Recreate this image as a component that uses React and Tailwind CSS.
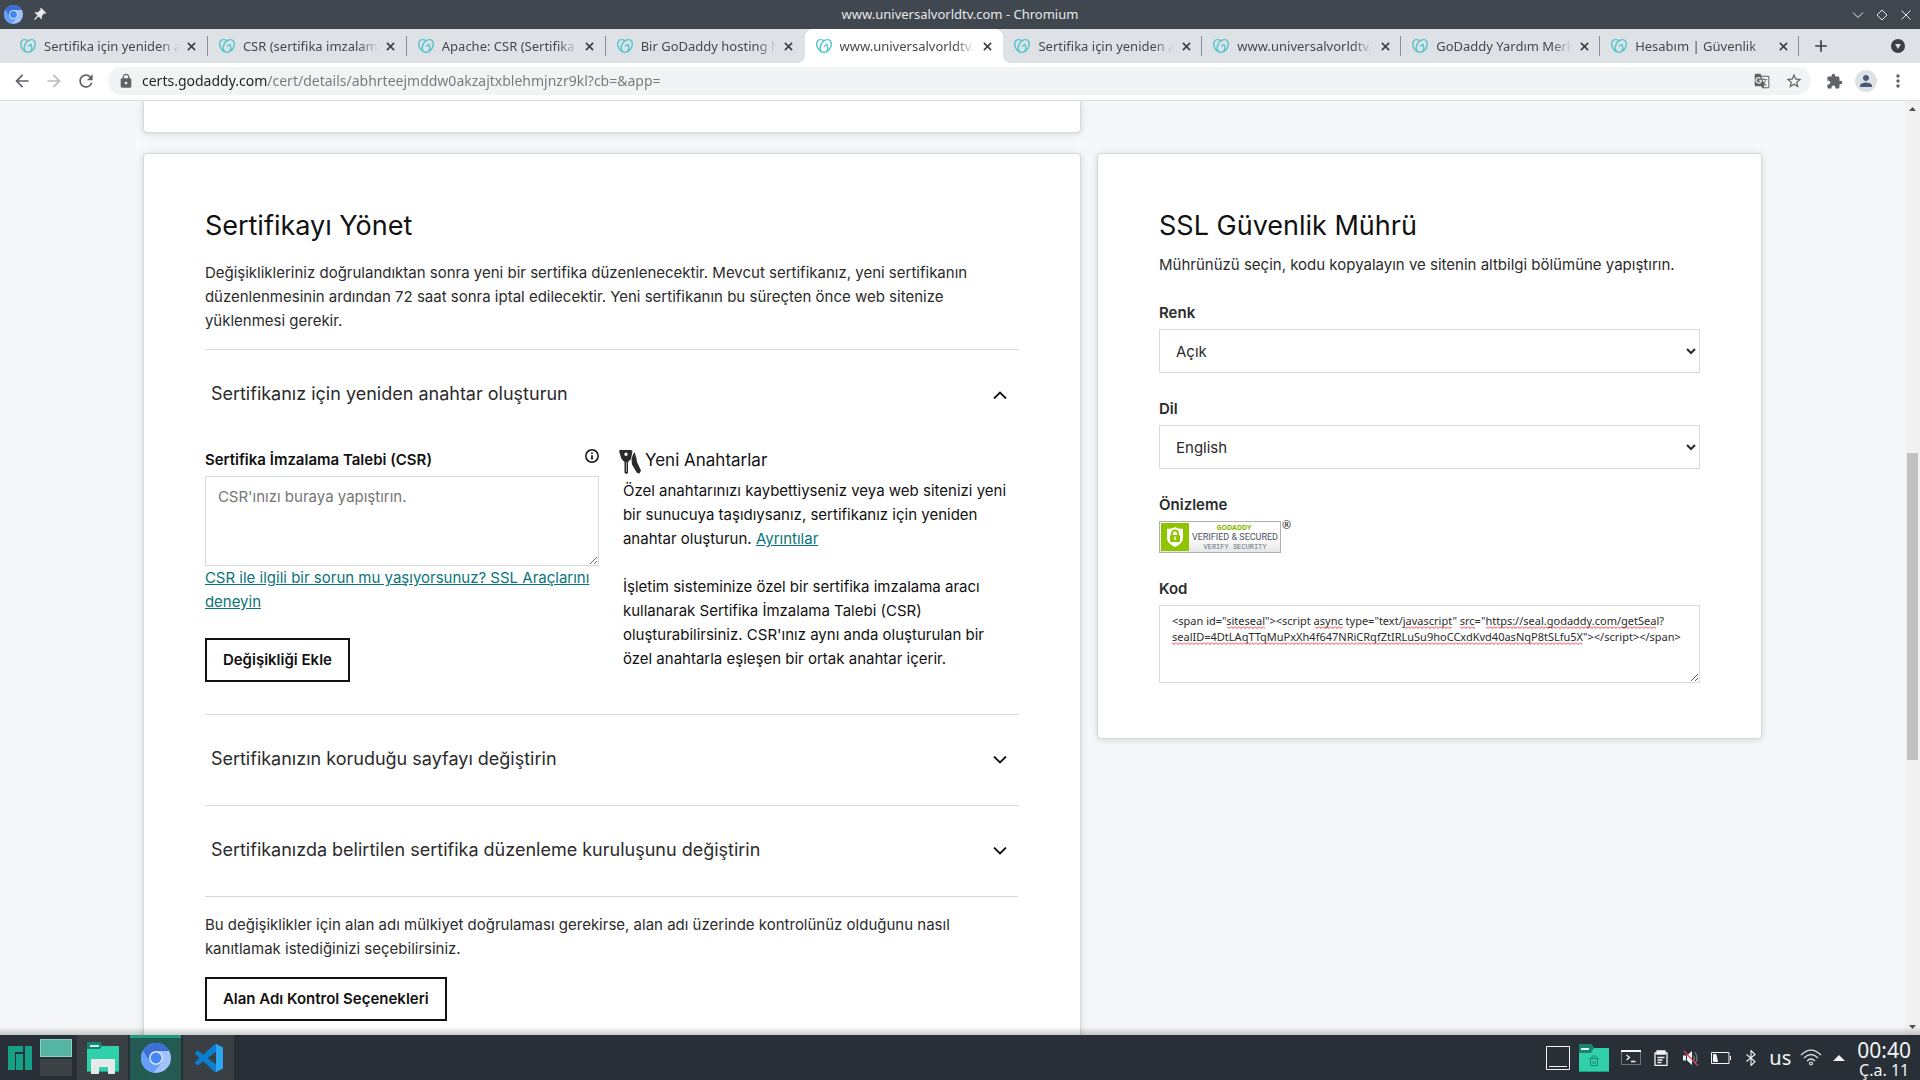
import React from 'react';
import {
  MdLock, MdArrowBack, MdArrowForward, MdRefresh, MdGTranslate, MdStarBorder,
  MdExtension, MdPerson, MdMoreVert, MdAdd, MdPushPin,
} from 'react-icons/md';
import { SiGodaddy } from 'react-icons/si';

const TABS = [
  { title: 'Sertifika için yeniden anahtar oluşturma' },
  { title: 'CSR (sertifika imzalama talebi)' },
  { title: 'Apache: CSR (Sertifika İmzalama)' },
  { title: 'Bir GoDaddy hosting hesabı' },
  { title: 'www.universalvorldtv.com', active: true },
  { title: 'Sertifika için yeniden anahtar oluşturma' },
  { title: 'www.universalvorldtv.com' },
  { title: 'GoDaddy Yardım Merkezi' },
  { title: 'Hesabım | Güvenlik' },
];

const SEAL_CODE =
  '<span id="siteseal"><script async type="text/javascript" src="https://seal.godaddy.com/getSeal?\nsealID=4DtLAqTTqMuPxXh4f647NRiCRqfZtIRLuSu9hoCCxdKvd40asNqP8tSLfu5X"></script></span>';

function ChromiumLogo({ className }) {
  return (
    <svg viewBox="0 0 30 30" className={className} aria-hidden="true">
      <circle cx="15" cy="15" r="15" fill="#a1c2fa" />
      <path d="M15 15 L2 7.5 A15 15 0 0 0 12.5 29.8 L21.5 18.7 Z" fill="#669df6" />
      <path d="M15 8 H28.3 A15 15 0 0 0 2 7.5 L8.9 18.5 Z" fill="#3c6fd4" />
      <circle cx="15" cy="15" r="7" fill="#d6e4fc" />
      <circle cx="15" cy="15" r="5.4" fill="#4285f4" />
    </svg>
  );
}

function TitleBar() {
  const btn = 'flex h-6 w-6 items-center justify-center';
  return (
    <header className="grid h-[29px] shrink-0 grid-cols-3 items-center bg-[#40474e] text-[#e6e8ea]">
      <div className="flex items-center gap-2 pl-1">
        <ChromiumLogo className="size-[19px]" />
        <MdPushPin className="size-4 rotate-45" />
      </div>
      <h1 className="text-center text-[13px]">www.universalvorldtv.com - Chromium</h1>
      <div className="flex items-center justify-end pr-[2px]">
        <button type="button" aria-label="Küçült" className={btn}>
          <svg viewBox="0 0 12 12" className="size-3" fill="none" stroke="currentColor"><path d="M1 3.5l5 5 5-5" /></svg>
        </button>
        <button type="button" aria-label="Geri yükle" className={btn}>
          <svg viewBox="0 0 12 12" className="size-3" fill="none" stroke="currentColor"><path d="M6 1l5 5-5 5-5-5z" /></svg>
        </button>
        <button type="button" aria-label="Kapat" className={btn}>
          <svg viewBox="0 0 12 12" className="size-3" fill="none" stroke="currentColor"><path d="M1.5 1.5l9 9M10.5 1.5l-9 9" /></svg>
        </button>
      </div>
    </header>
  );
}

function Tab({ title, active, divider }) {
  return (
    <div
      className={
        active
          ? 'relative flex h-[34px] min-w-0 flex-1 items-center rounded-t-lg bg-white pr-2 pl-[11px]'
          : 'relative flex h-[34px] min-w-0 flex-1 items-center pr-2 pl-[11px]'
      }
    >
      {active && (
        <>
          <span className="absolute bottom-0 -left-2 size-2 bg-[radial-gradient(circle_at_0_0,transparent_8px,white_8px)]" />
          <span className="absolute -right-2 bottom-0 size-2 bg-[radial-gradient(circle_at_100%_0,transparent_8px,white_8px)]" />
        </>
      )}
      <SiGodaddy className="size-4 shrink-0 text-[#55c7cd]" />
      <button
        type="button"
        className="ml-2 min-w-0 flex-1 overflow-hidden mask-r-from-85% pt-[2px] text-left text-[13px] whitespace-nowrap text-[#45494d]"
      >
        {title}
      </button>
      <button type="button" aria-label="Sekmeyi kapat" className="ml-1 flex size-4 shrink-0 items-center justify-center text-[#3c4043]">
        <svg viewBox="0 0 10 10" className="size-[9px]" fill="none" stroke="currentColor" strokeWidth="1.8"><path d="M1 1l8 8M9 1l-8 8" /></svg>
      </button>
      {divider && <span className="absolute top-[7px] right-0 h-5 w-px bg-[#8b8e92]" />}
    </div>
  );
}

function TabStrip() {
  return (
    <nav className="flex h-[34px] shrink-0 items-center bg-[#dee1e6] pl-[9px]">
      <div className="flex min-w-0 flex-1">
        {TABS.map((t, i) => (
          <Tab key={i} title={t.title} active={t.active} divider={i !== 3 && i !== 4} />
        ))}
      </div>
      <button type="button" aria-label="Yeni sekme" className="ml-3 flex size-5 items-center justify-center text-[#3c4043]">
        <MdAdd className="size-5" />
      </button>
      <button type="button" aria-label="Sekmelerde ara" className="mr-[15px] ml-[60px] flex size-[14px] items-center justify-center rounded-full bg-[#3c4043]">
        <svg viewBox="0 0 6 5" className="h-[5px] w-[6px]" fill="#dee1e6"><path d="M0 0h6L3 5z" /></svg>
      </button>
    </nav>
  );
}

function Toolbar() {
  const btn = 'flex h-8 w-8 shrink-0 items-center justify-center';
  return (
    <div className="flex h-[38px] shrink-0 items-center border-b border-[#d9dbde] bg-white px-[6px] pb-px text-[#5f6368]">
      <button type="button" aria-label="Geri" className={btn}><MdArrowBack className="size-5" /></button>
      <button type="button" aria-label="İleri" className="flex h-8 w-8 shrink-0 items-center justify-center text-[#b9bbbe]"><MdArrowForward className="size-5" /></button>
      <button type="button" aria-label="Yenile" className={btn}><MdRefresh className="size-5" /></button>
      <div className="ml-[6px] flex h-7 min-w-0 flex-1 items-center rounded-full bg-[#f1f3f4] pl-[10px]">
        <MdLock className="size-4 shrink-0" />
        <input
          type="text"
          aria-label="Adres"
          spellCheck={false}
          defaultValue="certs.godaddy.com/cert/details/abhrteejmddw0akzajtxblehmjnzr9kl?cb=&app="
          className="ml-2 min-w-0 flex-1 bg-[linear-gradient(to_right,#202124_126px,#75787c_126px)] bg-clip-text text-sm text-transparent outline-none"
        />
        <button type="button" aria-label="Çevir" className={btn}><MdGTranslate className="size-4" /></button>
        <button type="button" aria-label="Yer işareti" className="mr-px flex h-8 w-8 shrink-0 items-center justify-center"><MdStarBorder className="size-[18px]" /></button>
      </div>
      <button type="button" aria-label="Uzantılar" className="ml-[7px] flex h-8 w-8 shrink-0 items-center justify-center"><MdExtension className="size-[17px]" /></button>
      <button type="button" aria-label="Profil" className={btn}>
        <span className="flex size-[22px] items-center justify-center rounded-full bg-[#dee1e6] text-[#4d5a75]"><MdPerson className="size-[18px]" /></span>
      </button>
      <button type="button" aria-label="Menü" className={btn}><MdMoreVert className="size-5" /></button>
    </div>
  );
}

function Chevron({ up }) {
  return (
    <svg viewBox="0 0 14 8" className="h-2 w-[14px] shrink-0" fill="none" stroke="#111" strokeWidth="1.8" aria-hidden="true">
      <path d={up ? 'M1 7.5l6-6 6 6' : 'M1 .5l6 6 6-6'} />
    </svg>
  );
}

function AccordionButton({ children, open }) {
  return (
    <button
      type="button"
      aria-expanded={!!open}
      className="flex h-[91px] w-full items-center justify-between border-t border-[#d6d9dc] pr-[11px] pl-[6px] text-left text-lg leading-6 text-[#2b2b2b]"
    >
      <span className="pb-[2px]">{children}</span>
      <Chevron up={open} />
    </button>
  );
}

function KeysIcon() {
  return (
    <svg viewBox="0 0 22 24" className="h-6 w-[22px] shrink-0" aria-hidden="true">
      <path d="M14 4.5L15.500 2 17.500 8.500 18 12l4 8.500-1.500 3-2.500-.5L13 14.500 12.500 9z" fill="#2b2b2b" />
      <path fillRule="evenodd" d="M0 1l1-1h11l1.500 1-1.500 8-3 3v11l-1.500 1-2-1V12L2.500 9zM7 2.500a1.700 1.700 0 1 0 0 3.400 1.700 1.700 0 0 0 0-3.400z" fill="#2b2b2b" />
      <path d="M7.500 12v10" stroke="#bbb" strokeWidth=".8" />
    </svg>
  );
}

function ManageCard() {
  const outline = 'h-11 border-2 border-[#111] px-4 text-[15px] font-semibold text-[#111]';
  return (
    <section className="rounded border border-[#d4dbe0] bg-white pt-14 pr-[62px] pb-16 pl-[61px] shadow-[0_1px_7px_rgba(0,0,0,0.14)]">
      <h2 className="text-[27px] leading-8 text-[#111]">Sertifikayı Yönet</h2>
      <p className="mt-[19px] mb-4">
        Değişiklikleriniz doğrulandıktan sonra yeni bir sertifika düzenlenecektir. Mevcut sertifikanız, yeni sertifikanın
        düzenlenmesinin ardından 72 saat sonra iptal edilecektir. Yeni sertifikanın bu süreçten önce web sitenize
        yüklenmesi gerekir.
      </p>

      <AccordionButton open>Sertifikanız için yeniden anahtar oluşturun</AccordionButton>
      <div className="grid grid-cols-[minmax(0,394fr)_minmax(0,399fr)] gap-5 pt-2 pb-8 text-[#111]">
        <div>
          <div className="mb-1 flex justify-between">
            <label htmlFor="csr" className="font-semibold">Sertifika İmzalama Talebi (CSR)</label>
            <svg viewBox="0 0 14 14" className="mt-px size-[14px]" fill="none" stroke="#111" strokeWidth="1.5" aria-label="Bilgi">
              <circle cx="7" cy="7" r="6.2" />
              <path d="M7 6.2V10.500M7 3.500V5" strokeWidth="1.7" />
            </svg>
          </div>
          <textarea
            id="csr"
            placeholder="CSR'ınızı buraya yapıştırın."
            className="block h-[90px] w-full border border-[#d4dbe0] px-3 py-2 text-[15px] leading-6 placeholder:text-[#767676]"
          />
          <a href="#ssl" className="block text-[#09757a] underline">
            CSR ile ilgili bir sorun mu yaşıyorsunuz? SSL Araçlarını deneyin
          </a>
          <button type="button" className={outline + ' mt-6'}>Değişikliği Ekle</button>
        </div>
        <div className="pr-2">
          <h3 className="flex gap-1 text-[17px] leading-6">
            <span className="h-6 pt-[2px]"><KeysIcon /></span>
            Yeni Anahtarlar
          </h3>
          <p className="mt-[7px] pl-1">
            Özel anahtarınızı kaybettiyseniz veya web sitenizi yeni bir sunucuya taşıdıysanız, sertifikanız için yeniden
            anahtar oluşturun. <a href="#details" className="text-[#09757a] underline">Ayrıntılar</a>
          </p>
          <p className="mt-6 pl-1">
            İşletim sisteminize özel bir sertifika imzalama aracı kullanarak Sertifika İmzalama Talebi (CSR)
            oluşturabilirsiniz. CSR'ınız aynı anda oluşturulan bir özel anahtarla eşleşen bir ortak anahtar içerir.
          </p>
        </div>
      </div>

      <AccordionButton>Sertifikanızın koruduğu sayfayı değiştirin</AccordionButton>
      <AccordionButton>Sertifikanızda belirtilen sertifika düzenleme kuruluşunu değiştirin</AccordionButton>

      <div className="border-t border-[#d6d9dc] pt-4">
        <p>
          Bu değişiklikler için alan adı mülkiyet doğrulaması gerekirse, alan adı üzerinde kontrolünüz olduğunu nasıl
          kanıtlamak istediğinizi seçebilirsiniz.
        </p>
        <button type="button" className={outline + ' mt-4'}>Alan Adı Kontrol Seçenekleri</button>
      </div>
    </section>
  );
}

function SiteSeal() {
  return (
    <div className="mt-1 flex gap-px">
      <svg viewBox="0 0 122 32" className="h-8 w-[122px]" role="img" aria-label="GoDaddy Verified & Secured">
        <defs>
          <linearGradient id="sealShade" x1="0" y1="0" x2="0" y2="1">
            <stop offset=".5" stopColor="#fff" />
            <stop offset="1" stopColor="#e6e6e6" />
          </linearGradient>
        </defs>
        <rect x=".5" y=".5" width="121" height="31" fill="url(#sealShade)" stroke="#b0b0b0" />
        <rect x="2" y="2" width="28" height="28" fill="#90c400" />
        <path d="M16 6c2.5 1.5 5 1.8 8 1.8v9c0 4.5-3.5 7.2-8 9.2-4.500-2-8-4.700-8-9.200v-9c3 0 5.500-.3 8-1.800z" fill="#fff" />
        <path d="M13 14v-1.500a3 3 0 0 1 6 0V14" fill="none" stroke="#90c400" strokeWidth="1.8" />
        <rect x="11" y="14" width="10" height="7" rx="1" fill="#90c400" />
        <rect x="15.3" y="15.5" width="1.4" height="3.5" fill="#fff" />
        <text x="75" y="9" textAnchor="middle" className="fill-[#84b800] font-['Noto_Sans'] text-[7px] font-bold">GODADDY</text>
        <text x="76" y="19" textAnchor="middle" className="fill-[#4a5260] font-['Roboto'] text-[9px]">VERIFIED &amp; SECURED</text>
        <text x="76" y="28" textAnchor="middle" className="fill-[#66707f] font-['Liberation_Mono'] text-[7px]">VERIFY SECURITY</text>
      </svg>
      <span className="font-['Noto_Sans'] text-[11px] leading-2 text-[#222]">®</span>
    </div>
  );
}

const SQUIGGLES = [
  { left: 68, width: 38, top: 21 },
  { left: 156, width: 28, top: 21 },
  { left: 245, width: 48, top: 21 },
  { left: 301, width: 15, top: 21 },
  { left: 327, width: 170, top: 21 },
  { left: 13, width: 410, top: 37 },
];

function SealCard() {
  const select = 'mt-1 block h-11 w-full border border-[#d4dbe0] bg-white pl-3 text-[15px] text-[#2b2b2b]';
  return (
    <section className="self-start rounded border border-[#d4dbe0] bg-white px-[61px] pt-14 pb-[55px] shadow-[0_1px_7px_rgba(0,0,0,0.14)]">
      <h2 className="text-[27px] leading-8 text-[#111]">SSL Güvenlik Mührü</h2>
      <p className="mt-[11px]">Mührünüzü seçin, kodu kopyalayın ve sitenin altbilgi bölümüne yapıştırın.</p>
      <label htmlFor="color" className="mt-6 block font-semibold">Renk</label>
      <select id="color" className={select}><option>Açık</option></select>
      <label htmlFor="lang" className="mt-6 block font-semibold">Dil</label>
      <select id="lang" className={select}><option>English</option></select>
      <h3 className="mt-6 font-semibold">Önizleme</h3>
      <SiteSeal />
      <label htmlFor="code" className="mt-6 block font-semibold">Kod</label>
      <div className="relative mt-1">
        <textarea
          id="code"
          spellCheck={false}
          defaultValue={SEAL_CODE}
          className="block h-[78px] w-full border border-[#d4dbe0] px-3 py-[7px] font-['Noto_Sans'] text-[11px] leading-4 text-[#2b2b2b]"
        />
        <svg className="pointer-events-none absolute inset-0 h-full w-full" aria-hidden="true">
          <defs>
            <pattern id="wave" width="4" height="3" patternUnits="userSpaceOnUse">
              <path d="M0 .5l2 2 2-2" fill="none" stroke="#e5403a" />
            </pattern>
          </defs>
          {SQUIGGLES.map((s) => (
            <g key={s.left} transform={`translate(${s.left} ${s.top})`}>
              <rect width={s.width} height="3" fill="url(#wave)" />
            </g>
          ))}
        </svg>
      </div>
    </section>
  );
}

function Scrollbar() {
  return (
    <div className="flex w-[15px] shrink-0 flex-col items-center bg-[#f1f1f1]" aria-hidden="true">
      <svg viewBox="0 0 15 16" className="h-4 w-[15px]" fill="#505050"><path d="M4 10h7L7.5 6z" /></svg>
      <div className="w-[11px] flex-1">
        <div className="h-[37.3%]" />
        <div className="h-[34%] bg-[#c1c1c1]" />
      </div>
      <svg viewBox="0 0 15 16" className="h-4 w-[15px]" fill="#505050"><path d="M4 6h7l-3.5 4z" /></svg>
    </div>
  );
}

function Taskbar() {
  return (
    <footer className="flex h-[45px] shrink-0 items-stretch bg-[#292f36] text-[#f2f4f5]">
      <button type="button" aria-label="Uygulama menüsü" className="flex w-10 items-center justify-center">
        <svg viewBox="0 0 24 24" className="size-6" fill="#16a085">
          <path d="M0 0h15v6H7v18H0zM8 8h7v16H8zM17 0h7v24h-7z" />
        </svg>
      </button>
      <div className="flex w-8 flex-col gap-[2px] pt-1">
        <button type="button" aria-label="Masaüstü 1" className="h-[18px] border border-[#86d3c3] bg-[#56b5a3]" />
        <button type="button" aria-label="Masaüstü 2" className="h-[17px] bg-[#3c4145]" />
      </div>
      <div className="ml-[5px] flex gap-[2px]">
        <button type="button" aria-label="Dosyalar" className="flex w-[51px] items-center justify-center bg-[#3a3f43]">
          <svg viewBox="0 0 32 32" className="size-8">
            <path d="M0 0h13l2 4h17v26H0z" fill="#2fd0aa" />
            <path d="M0 0h13l2 4-2 3H0z" fill="#16856f" />
            <rect x="3" y="3" width="9" height="2" fill="#c9ecf5" />
            <path d="M0 29h32v1H0z" fill="#1d9f82" />
            <path d="M4 17h24v15h-7v-7h-9v7H4z" fill="#e6e8e9" />
          </svg>
        </button>
        <button type="button" aria-label="Chromium" className="flex w-[51px] items-center justify-center border-t-[3px] border-[#1f9d80] bg-[#235b53] pb-[3px]">
          <ChromiumLogo className="size-[30px]" />
        </button>
        <button type="button" aria-label="Visual Studio Code" className="flex w-[51px] items-center justify-center bg-[#3a3f43]">
          <svg viewBox="0 0 24 24" className="size-7">
            <path
              d="M23.15 2.587L18.21.21a1.494 1.494 0 0 0-1.705.29l-9.46 8.63-4.12-3.128a.999.999 0 0 0-1.276.057L.327 7.261A1 1 0 0 0 .326 8.74L3.899 12 .326 15.26a1 1 0 0 0 .001 1.479L1.65 17.94a.999.999 0 0 0 1.276.057l4.12-3.128 9.46 8.63a1.492 1.492 0 0 0 1.704.29l4.942-2.377A1.5 1.5 0 0 0 24 20.06V3.939a1.5 1.5 0 0 0-.85-1.352zm-5.146 14.861L10.826 12l7.178-5.448v10.896z"
              fill="#0a7fd0"
            />
            <path d="M18.004 .1L23.15 2.587A1.5 1.5 0 0 1 24 3.939V20.06a1.5 1.5 0 0 1-.848 1.352L18.004 23.900z" fill="#2ea6f2" />
          </svg>
        </button>
      </div>

      <div className="ml-auto flex items-center pr-[9px]">
        <svg viewBox="0 0 24 24" className="size-6" fill="none" stroke="#f2f4f5"><path d="M.5.5h23v23H.5zM3 20.5h18" /></svg>
        <svg viewBox="0 0 30 28" className="ml-[9px] h-7 w-[30px]">
          <path d="M0 0h12l3 4h15v24H0z" fill="#2fd0aa" />
          <path d="M0 0h12l3 4-3 5H0z" fill="#16856f" />
          <rect x="2" y="4" width="8" height="2" fill="#e9f6fa" />
          <path d="M0 27h30v1H0z" fill="#1d9f82" />
          <path d="M10 14.5h10M13 14v-2h4v2M11.5 15v6.5h7V15M14 17v3M16 17v3" stroke="#1a8e74" fill="none" />
        </svg>
        <svg viewBox="0 0 20 15" className="ml-3 h-[15px] w-5" fill="none">
          <rect x=".5" y=".5" width="19" height="14" stroke="#70767b" />
          <path d="M0 1h20" stroke="#f2f4f5" strokeWidth="2" />
          <path d="M5.5 5l3 2.5-3 2.5M10 11.5h4.500" stroke="#f2f4f5" strokeWidth="1.3" />
        </svg>
        <svg viewBox="0 0 14 16" className="ml-[13px] h-4 w-[14px]" fill="none" stroke="#f2f4f5" strokeWidth="1.3">
          <path d="M1 3h12v12.3H1z" />
          <path d="M3 1h8v3H3z" fill="#f2f4f5" />
          <path d="M3.5 7.5h7M3.5 10h5M3.5 12.5h4" />
        </svg>
        <svg viewBox="0 0 16 16" className="ml-[15px] size-4" fill="none">
          <path d="M0 5.5h3v5H0zM4 5.5L9 1v14l-5-4.500z" fill="#f2f4f5" />
          <path d="M10.5 5.5q2 2.500 0 5M12 2.500q4 5.500 0 11" stroke="#7a8085" strokeWidth="1.2" />
          <path d="M1 1l14 15" stroke="#da4453" strokeWidth="1.2" />
        </svg>
        <svg viewBox="0 0 20 12" className="ml-3 h-3 w-5" fill="none" stroke="#f2f4f5">
          <path d="M.5.5h17.500v11H.5zM19.500 4v4" />
          <path d="M2.5 2.5h2.500l1.500 7h-4z" fill="#f2f4f5" />
        </svg>
        <svg viewBox="0 0 12 16" className="ml-[14px] h-4 w-3" fill="none" stroke="#f2f4f5" strokeWidth="1.1">
          <path d="M1.5 4.5l8.500 7-4 4V.5l4 4-8.500 7" />
        </svg>
        <span className="ml-3 text-xl leading-6">us</span>
        <svg viewBox="0 0 22 17" className="ml-[9px] h-[17px] w-[22px]" fill="none" stroke="#dfe2e4" strokeWidth="1.2">
          <path d="M1 6q10-10 20 0M4 9q7-7 14 0M7 12q4-4 8 0" />
          <circle cx="11" cy="14.5" r="1.5" />
        </svg>
        <svg viewBox="0 0 12 6" className="ml-[11px] h-[6px] w-3" fill="#f2f4f5"><path d="M0 6h12L6 0z" /></svg>
        <div className="ml-3 text-center">
          <div className="text-[21px] leading-6">00:40</div>
          <div className="text-base leading-4">Ç.a. 11</div>
        </div>
      </div>
    </footer>
  );
}

export default function App() {
  return (
    <div className="flex h-screen flex-col overflow-hidden font-['Noto_Sans',sans-serif]">
      <TitleBar />
      <TabStrip />
      <Toolbar />
      <div className="relative flex min-h-0 flex-1 bg-[#f5f7f8]">
        <main className="min-w-0 flex-1 overflow-hidden font-['Inter',sans-serif] text-[15px] leading-6 text-[#2b2b2b]">
          <div className="mx-auto grid w-[85%] grid-cols-[minmax(0,938fr)_minmax(0,665fr)] gap-x-4 gap-y-5">
            <div className="col-start-1 h-8 rounded-b border border-t-0 border-[#d4dbe0] bg-white shadow-[0_1px_7px_rgba(0,0,0,0.14)]" />
            <div />
            <ManageCard />
            <SealCard />
          </div>
        </main>
        <Scrollbar />
        <div className="pointer-events-none absolute inset-x-0 bottom-0 h-2 bg-linear-to-b from-transparent to-black/20" />
      </div>
      <Taskbar />
    </div>
  );
}
